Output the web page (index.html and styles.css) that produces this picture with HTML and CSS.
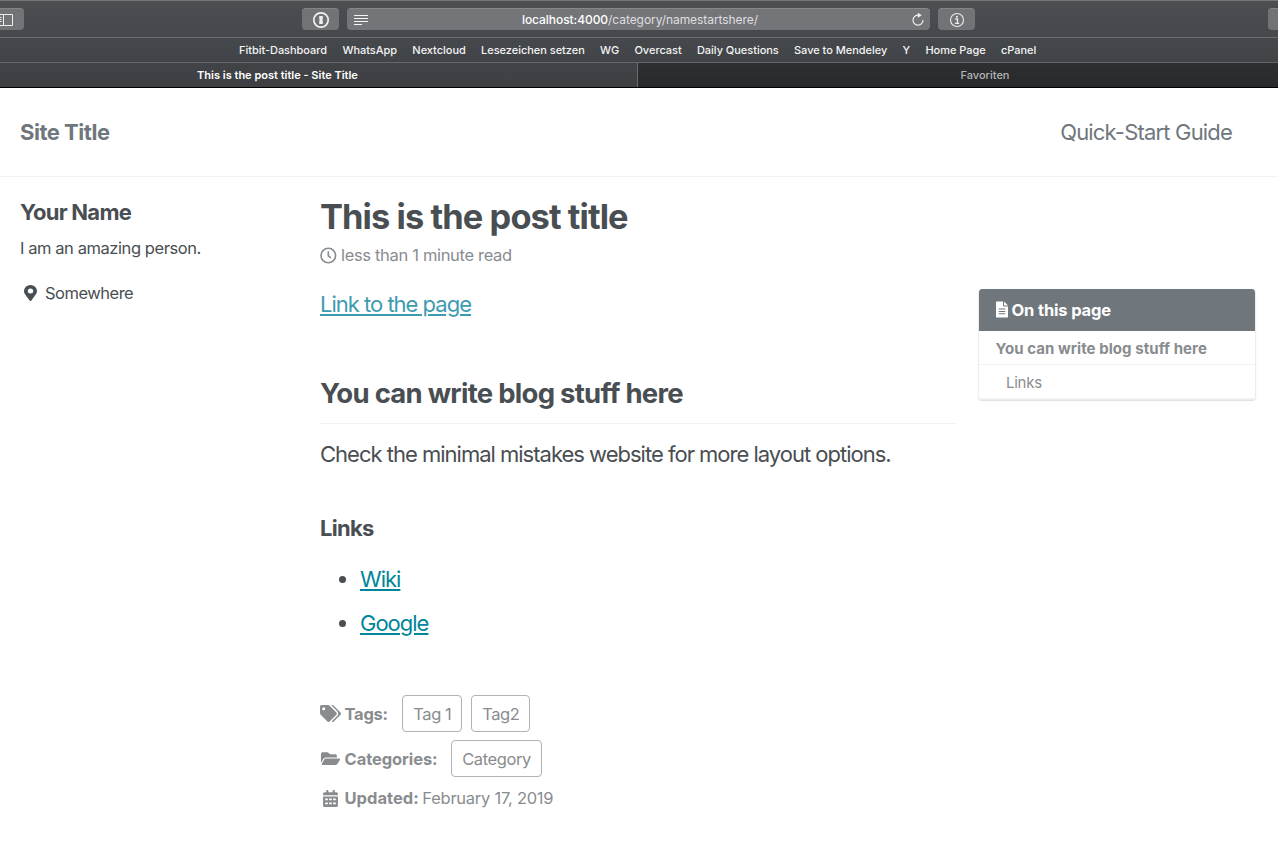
FILE: index.html
```html
<!DOCTYPE html>
<html lang="en">
<head>
<meta charset="utf-8">
<title>This is the post title - Site Title</title>
<link rel="stylesheet" href="styles.css">
</head>
<body>
<div class="browser">
  <div class="toolbar">
    <div class="tool tool-sidebar"><svg width="18" height="14" viewBox="0 0 18 14" fill="none" stroke="#eee"><path d="M.5 1.500h16v11H.5zM7.500 1.500v11M2.500 4.500h3M2.500 6.500h3M2.500 8.500h3"/></svg></div>
    <div class="tool tool-password"><svg width="18" height="18" viewBox="0 0 18 18"><circle cx="9" cy="9" r="7.200" fill="none" stroke="#f2f2f2" stroke-width="1.700"/><path d="M7.200 5h3.600v3.200l-.7.800.7.800V13H7.200V9.800l.7-.8-.7-.8z" fill="#eee"/></svg></div>
    <div class="address">
      <svg width="16" height="12" viewBox="0 0 16 12" stroke="#f4f4f4"><path d="M1 1.500h14M1 4.500h14M1 7.500h14M1 10.500h8"/></svg>
      <span class="url"><b>localhost:4000</b>/category/namestartshere/</span>
      <svg width="14" height="16" viewBox="0 0 14 16"><path d="M7.500 3.200A5 5 0 1 0 12 8" fill="none" stroke="#f0f0f0" stroke-width="1.200"/><path d="M6.800.7v5l4-2.500z" fill="#f0f0f0"/></svg>
    </div>
    <div class="tool tool-info"><svg width="16" height="16" viewBox="0 0 16 16"><circle cx="8" cy="8" r="6.500" fill="none" stroke="#eee" stroke-width="1.100"/><circle cx="7.900" cy="4.800" r="1.050" fill="#eee"/><path d="M6.300 7h2.200v4.100M6 11.300h4.200" fill="none" stroke="#eee" stroke-width="1.300"/></svg></div>
    <div class="tool tool-edge"></div>
  </div>
  <div class="bookmarks"><span>Fitbit-Dashboard</span><span>WhatsApp</span><span>Nextcloud</span><span>Lesezeichen setzen</span><span>WG</span><span>Overcast</span><span>Daily Questions</span><span>Save to Mendeley</span><span>Y</span><span>Home Page</span><span>cPanel</span></div>
  <div class="tabs"><div class="tab tab-active"><span>This is the post title - Site Title</span></div><div class="tab"><span>Favoriten</span></div></div>
</div>
<header class="masthead"><a class="site-title">Site Title</a><a class="guide">Quick-Start Guide</a></header>
<div class="page">
  <aside class="author">
    <h3 class="author-name">Your Name</h3>
    <p class="bio">I am an amazing person.</p>
    <p class="place"><svg width="13" height="16" viewBox="0 0 384 512" preserveAspectRatio="none" fill="currentColor"><path d="M172 502C27 291 0 270 0 192a192 192 0 0 1 384 0c0 78-27 99-172 310-10 13-30 13-40 0zM192 272a80 80 0 1 0 0-160 80 80 0 0 0 0 160z"/></svg><span>Somewhere</span></p>
  </aside>
  <main class="post">
    <h1 class="title">This is the post title</h1>
    <p class="read"><svg width="17" height="17" viewBox="0 0 17 17" fill="none" stroke="currentColor" stroke-width="1.600"><circle cx="8.300" cy="8.500" r="7.300"/><path d="M8.300 4.200v4.700l2.600 2"/></svg><span>less than 1 minute read</span></p>
    <p class="intro"><a class="link link-soft">Link to the page</a></p>
    <h2 class="section">You can write blog stuff here</h2>
    <p class="text">Check the minimal mistakes website for more layout options.</p>
    <h3 class="sub">Links</h3>
    <ul class="links"><li><a class="link">Wiki</a></li><li><a class="link">Google</a></li></ul>
    <footer class="meta">
      <div class="row"><svg width="21" height="17" viewBox="0 0 640 512" fill="currentColor"><path d="M497.900 225.900L286 14.100A48 48 0 0 0 252.100 0H48A48 48 0 0 0 0 48v204.100a48 48 0 0 0 14.100 33.900l211.800 211.900c18.800 18.700 49.200 18.700 67.900 0l204.100-204.100c18.700-18.700 18.700-49.100 0-67.900zM112 160a48 48 0 1 1 0-96 48 48 0 0 1 0 96zm513.900 133.800L421.800 497.900c-18.700 18.700-49.100 18.700-67.900 0l-.4-.4 174-174c18.100-18.100 28.100-42.200 28.100-67.900s-10-49.700-28.100-67.900L340 0h40a48 48 0 0 1 34.100 14.100l211.800 211.800c18.700 18.800 18.700 49.200 0 67.900z"/></svg><strong>Tags:</strong><a class="tag tag-one">Tag 1</a><a class="tag tag-two">Tag2</a></div>
      <div class="row"><svg width="21" height="17" viewBox="-18 0 612 512" fill="currentColor"><path d="M573 292.100L500 416.200A64 64 0 0 1 445 448H45c-18 0-30-20-20-36.200l72-124A64 64 0 0 1 152 256h400c18 0 30 20 21 36.100zM152 224h328v-48a48 48 0 0 0-48-48H272l-64-64H48A48 48 0 0 0 0 112v278l69-118a96 96 0 0 1 83-48z"/></svg><strong class="wide-label">Categories:</strong><a class="tag tag-cat">Category</a></div>
      <div class="row row-date"><svg width="21" height="17" viewBox="-92 0 632 512" fill="currentColor" fill-rule="evenodd"><path d="M0 192h448v272a48 48 0 0 1-48 48H48a48 48 0 0 1-48-48zM64 256v56h80v-56zM184 256v56h80v-56zM304 256v56h80v-56zM64 376v56h80v-56zM184 376v56h80v-56zM304 376v56h80v-56zM0 160v-48a48 48 0 0 1 48-48h48V12q0-12 12-12h40q12 0 12 12v52h128V12q0-12 12-12h40q12 0 12 12v52h48a48 48 0 0 1 48 48v48z"/></svg><strong class="date-label">Updated:</strong><time>February 17, 2019</time></div>
    </footer>
  </main>
  <nav class="toc">
    <h4 class="toc-head"><svg width="12" height="17" viewBox="0 0 384 512" fill="currentColor" fill-rule="evenodd"><path d="M224 136V0H24A24 24 0 0 0 0 24v464a24 24 0 0 0 24 24h336a24 24 0 0 0 24-24V160H248a24 24 0 0 1-24-24zM256 0v128h128zM88 224h208v32H88zM88 300h208v32H88zM88 376h208v32H88z"/></svg><span>On this page</span></h4>
    <a class="toc-main">You can write blog stuff here</a>
    <a class="toc-sub">Links</a>
  </nav>
</div>
</body>
</html>
```
FILE: styles.css
```css
* { box-sizing: border-box; }
body, h1, h2, h3, h4, p, ul { margin: 0; padding: 0; }
body { width: 1278px; height: 844px; overflow: hidden; background: #fff; color: #494e52; font-family: Inter, sans-serif; font-size: 22px; }
svg { display: block; flex: none; }
.browser { height: 88px; background: linear-gradient(#4b4f52, #3d3f43); border-top: 1px solid #74787a; border-bottom: 1px solid #000; color: #f3f3f4; }
.toolbar { height: 37px; display: flex; align-items: center; border-bottom: 1px solid #6b6f72; }
.tool { height: 22px; width: 37px; border-radius: 4px; background: #727376; border-top: 1px solid #828486; display: flex; align-items: center; justify-content: center; }
.tool-sidebar { width: 24px; margin-right: 278px; border-radius: 0 4px 4px 0; justify-content: flex-start; overflow: hidden; }
.tool-sidebar svg { margin-left: -4px; }
.tool-password { margin-right: 8px; }
.address { width: 583px; height: 22px; margin-right: 8px; padding: 0 5px 0 6px; border-radius: 4px; background: #747578; border-top: 1px solid #868789; display: flex; align-items: center; justify-content: space-between; }
.url { font-size: 12px; letter-spacing: -.06px; color: #dedfe0; }
.url b { color: #fff; font-weight: 500; }
.tool-edge { margin-left: auto; width: 10px; border-radius: 4px 0 0 4px; }
.bookmarks { height: 25px; display: flex; gap: 15.3px; padding-left: 239px; line-height: 24px; font-size: 11px; font-weight: 500; letter-spacing: -.03px; white-space: nowrap; border-bottom: 1px solid #64676b; }
.tabs { height: 24px; display: flex; font-size: 11px; font-weight: 500; line-height: 25px; text-align: center; }
.tab { flex: 1; color: #b5b5b7; background: linear-gradient(#2e2f31, #28292b); padding-left: 54px; }
.tab-active { flex: none; width: 638px; color: #fff; background: none; border-right: 1px solid #696c6f; padding: 0 82px 0 0; font-weight: 600; }
.masthead { height: 89px; border-bottom: 1px solid #f2f3f3; padding: 0 46px 0 20px; display: flex; align-items: center; justify-content: space-between; color: #6f777d; }
.site-title { font-weight: 700; letter-spacing: -.48px; }
.guide { letter-spacing: -.82px; }
.page { display: grid; grid-template-columns: 300px 636px 300px; padding-left: 20px; align-items: start; }
.author { padding-top: 19px; font-size: 16.5px; line-height: 26px; }
.author-name { font-size: 22px; line-height: 32px; letter-spacing: -.74px; }
.bio { margin-top: 7px; letter-spacing: -.43px; }
.place { margin-top: 19px; margin-left: 4px; display: flex; align-items: center; gap: 8px; letter-spacing: -.5px; }
.post { padding-top: 20px; }
.title { font-size: 34.4px; line-height: 40px; letter-spacing: -.91px; }
.read { display: flex; align-items: center; gap: 4px; margin-top: 5px; line-height: 26px; font-size: 16.5px; letter-spacing: -.33px; color: #898c8f; }
.intro { margin-top: 19px; line-height: 34px; }
.link { color: #00859a; text-decoration: underline; text-decoration-thickness: 1.5px; text-underline-offset: 2px; letter-spacing: -1px; }
.link-soft { color: #3d9bb0; }
.section { margin-top: 54px; padding-bottom: 12px; line-height: 36px; font-size: 27.5px; letter-spacing: -.74px; border-bottom: 1px solid #f2f3f3; }
.text { margin-top: 13px; line-height: 34px; letter-spacing: -1px; white-space: nowrap; }
.sub { margin-top: 43px; font-size: 22px; line-height: 28px; letter-spacing: -.7px; }
.links { margin-top: 20px; padding-left: 40px; display: flex; flex-direction: column; gap: 10px; line-height: 34px; }
.meta { margin-top: 55px; display: flex; flex-direction: column; gap: 8px; font-size: 16.5px; letter-spacing: -.25px; color: #898c8f; }
.row { height: 37px; display: flex; align-items: center; gap: 3.5px; }
.row-date { height: 26px; }
.wide-label { letter-spacing: -.08px; }
.date-label { letter-spacing: .03px; }
.tag { height: 37px; border: 1px solid #b0b2b4; border-radius: 4px; line-height: 36px; text-align: center; white-space: nowrap; letter-spacing: -.4px; }
.tag-one { width: 60px; margin-left: 11px; }
.tag-two { width: 59px; margin-left: 5.5px; }
.tag-cat { width: 91px; margin-left: 10px; }
.toc { margin: 111.5px 0 0 22px; border: 1px solid #eceded; border-top: 0; border-radius: 4px; box-shadow: 0 1px 1px rgba(0,0,0,.13); color: #898c8f; overflow: hidden; font-size: 15px; }
.toc-head { height: 42px; padding-left: 17px; display: flex; align-items: center; gap: 3.5px; background: #6f777d; color: #fff; font-size: 16.5px; letter-spacing: -.15px; }
.toc-main { height: 34px; line-height: 35px; padding-left: 16.5px; display: block; font-weight: 700; border-bottom: 1px solid #f2f3f3; letter-spacing: .06px; }
.toc-sub { height: 34px; line-height: 36px; padding-left: 27px; display: block; border-bottom: 1px solid #f2f3f3; letter-spacing: -.25px; }
```
